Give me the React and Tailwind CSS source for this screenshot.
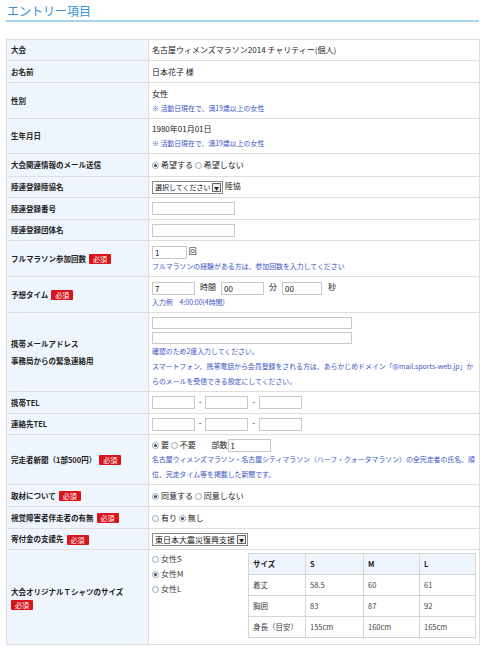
import React from 'react';

const font = { fontFamily: '"Noto Sans CJK JP", "Noto Sans", sans-serif' };

function Badge() {
  return (
    <span className="inline-block bg-[#d9141b] text-white text-[7px] leading-[10px] px-[4px] rounded-[1px] font-normal align-middle ml-[3px]">
      必須
    </span>
  );
}

function Radio({ checked }) {
  return (
    <span className="inline-flex items-center justify-center w-[7px] h-[7px] rounded-full border border-[#9aa4ae] bg-white align-middle mr-[2px]">
      {checked && <span className="w-[3px] h-[3px] rounded-full bg-[#2d4a6b]" />}
    </span>
  );
}

function Input({ w, value, h = 'h-[13px]' }) {
  return (
    <span className={`inline-block ${w} ${h} border border-[#c8c8c8] bg-white align-middle text-[8px] leading-[11px] pl-[2px] text-[#222]`}>
      {value}
    </span>
  );
}

function Select({ w, label, size = 'text-[7px]' }) {
  return (
    <span className={`inline-flex items-center ${w} h-[13px] border border-[#8a8a8a] bg-white align-middle ${size} text-[#222]`}>
      <span className="flex-1 pl-[2px] leading-[11px] whitespace-nowrap overflow-hidden">{label}</span>
      <span className="w-[9px] h-[9px] mr-[1px] border border-[#666] flex items-center justify-center text-[5px] leading-none bg-[#eee]">▼</span>
    </span>
  );
}

function Note({ children }) {
  return <div className="text-[#3a54c4] text-[6.9px] leading-[15px]">{children}</div>;
}

function Row({ h, label, badge, children, labelExtra }) {
  return (
    <tr className={h}>
      <th className="w-[143px] bg-[#eef5fd] border border-[#dedede] text-left align-middle pl-[4px] pr-[2px] font-bold text-[7.5px] text-[#222]">
        {label}
        {badge && <Badge />}
        {labelExtra}
      </th>
      <td className="border border-[#dedede] bg-white align-middle pl-[3px] pr-[1px] text-[8px] text-[#222]">
        {children}
      </td>
    </tr>
  );
}

function SizeCell({ children }) {
  return <td className="border border-[#d6d6d6] pl-[4px]">{children}</td>;
}

export default function App() {
  return (
    <div className="w-[486px] h-[656px] bg-white px-[6px] pt-[3px]" style={font}>
      <h2 className="text-[#3d8fd2] text-[12px] leading-[16px] pl-[1px] pb-[1px] border-b-2 border-[#a6d3ee] mr-[1px]">
        エントリー項目
      </h2>
      <table className="mt-[17px] w-[474px] border-collapse border border-[#dedede]">
        <tbody>
          <Row h="h-[21px]" label="大会">名古屋ウィメンズマラソン2014 チャリティー(個人)</Row>
          <Row h="h-[22px]" label="お名前">日本花子 様</Row>
          <Row h="h-[36px]" label="性別">
            <div className="leading-[15px]">女性</div>
            <Note>※ 活動日現在で、満19歳以上の女性</Note>
          </Row>
          <Row h="h-[35px]" label="生年月日">
            <div className="leading-[15px]">1980年01月01日</div>
            <Note>※ 活動日現在で、満19歳以上の女性</Note>
          </Row>
          <Row h="h-[23px]" label="大会関連情報のメール送信">
            <Radio checked />希望する <Radio />希望しない
          </Row>
          <Row h="h-[21px]" label="陸連登録陸協名">
            <Select w="w-[71px]" label="選択してください" /> 陸協
          </Row>
          <Row h="h-[22px]" label="陸連登録番号">
            <Input w="w-[83px]" />
          </Row>
          <Row h="h-[21px]" label="陸連登録団体名">
            <Input w="w-[83px]" />
          </Row>
          <Row h="h-[36px]" label="フルマラソン参加回数" badge>
            <div className="leading-[15px]"><Input w="w-[35px]" value="1" /> 回</div>
            <Note>フルマラソンの経験がある方は、参加回数を入力してください</Note>
          </Row>
          <Row h="h-[36px]" label="予想タイム" badge>
            <div className="leading-[15px] whitespace-nowrap">
              <Input w="w-[43px]" value="7" />
              <span className="mx-[5px]">時間</span>
              <Input w="w-[43px]" value="00" />
              <span className="mx-[5px]">分</span>
              <Input w="w-[40px]" value="00" />
              <span className="mx-[6px]">秒</span>
            </div>
            <Note>入力例　4:00:00(4時間)</Note>
          </Row>
          <Row
            h="h-[79px]"
            label="携帯メールアドレス"
            labelExtra={<div className="mt-[6px]">事務局からの緊急連絡用</div>}
          >
            <div className="flex flex-col gap-[3px] pt-[1px]">
              <Input w="w-[200px]" h="h-[12px]" />
              <Input w="w-[200px]" h="h-[12px]" />
            </div>
            <Note>確認のため2度入力してください。</Note>
            <Note>スマートフォン、携帯電話から会員登録をされる方は、あらかじめドメイン「@mail.sports-web.jp」からのメールを受信できる設定にしてください。</Note>
          </Row>
          <Row h="h-[22px]" label="携帯TEL">
            <Input w="w-[43px]" /> <span className="mx-[2px]">-</span> <Input w="w-[43px]" /> <span className="mx-[2px]">-</span> <Input w="w-[43px]" />
          </Row>
          <Row h="h-[21px]" label="連絡先TEL">
            <Input w="w-[43px]" /> <span className="mx-[2px]">-</span> <Input w="w-[43px]" /> <span className="mx-[2px]">-</span> <Input w="w-[43px]" />
          </Row>
          <Row h="h-[50px]" label="完走者新聞（1部500円）" badge>
            <div className="leading-[15px] whitespace-nowrap">
              <Radio checked />要 <Radio />不要 <span className="ml-[14px]">部数</span>
              <Input w="w-[43px]" value="1" />
            </div>
            <Note>名古屋ウィメンズマラソン・名古屋シティマラソン（ハーフ・クォータマラソン）の全完走者の氏名、順位、完走タイム等を掲載した新聞です。</Note>
          </Row>
          <Row h="h-[22px]" label="取材について" badge>
            <Radio checked />同意する <Radio />同意しない
          </Row>
          <Row h="h-[22px]" label="視覚障害者伴走者の有無" badge>
            <Radio />有り <Radio checked />無し
          </Row>
          <Row h="h-[21px]" label="寄付金の支援先" badge>
            <Select w="w-[96px]" label="東日本大震災復興支援" size="text-[8px]" />
          </Row>
          <tr className="h-[95px]">
            <th className="w-[143px] bg-[#eef5fd] border border-[#dedede] text-left align-middle pl-[4px] font-bold text-[7.5px] text-[#222]">
              <div className="pt-[2px]">大会オリジナルＴシャツのサイズ</div>
              <div className="mt-[1px]"><span className="inline-block bg-[#d9141b] text-white text-[7px] leading-[10px] px-[4px] rounded-[1px] font-normal">必須</span></div>
            </th>
            <td className="border border-[#dedede] bg-white align-top pl-[3px] pr-[3px] text-[8px] text-[#333]">
              <div className="flex">
                <div className="w-[96px] pt-[1px] text-[#444]">
                  <div className="leading-[15px]"><Radio />女性S</div>
                  <div className="leading-[15px]"><Radio checked />女性M</div>
                  <div className="leading-[15px]"><Radio />女性L</div>
                </div>
                <table className="mt-[3px] w-[228px] border-collapse border border-[#d6d6d6] text-[7.5px] text-[#444]">
                  <tbody>
                    <tr className="h-[21px] bg-[#eef5fd] font-bold text-[#222]">
                      <td className="w-[57px] border border-[#d6d6d6] pl-[4px]">サイズ</td>
                      <td className="w-[58px] border border-[#d6d6d6] pl-[4px]">S</td>
                      <td className="w-[56px] border border-[#d6d6d6] pl-[4px]">M</td>
                      <td className="border border-[#d6d6d6] pl-[4px]">L</td>
                    </tr>
                    <tr className="h-[21px]">
                      <SizeCell>着丈</SizeCell>
                      <SizeCell>58.5</SizeCell>
                      <SizeCell>60</SizeCell>
                      <SizeCell>61</SizeCell>
                    </tr>
                    <tr className="h-[21px]">
                      <SizeCell>胸囲</SizeCell>
                      <SizeCell>83</SizeCell>
                      <SizeCell>87</SizeCell>
                      <SizeCell>92</SizeCell>
                    </tr>
                    <tr className="h-[21px]">
                      <SizeCell>身長（目安）</SizeCell>
                      <SizeCell>155cm</SizeCell>
                      <SizeCell>160cm</SizeCell>
                      <SizeCell>165cm</SizeCell>
                    </tr>
                  </tbody>
                </table>
              </div>
            </td>
          </tr>
        </tbody>
      </table>
    </div>
  );
}
